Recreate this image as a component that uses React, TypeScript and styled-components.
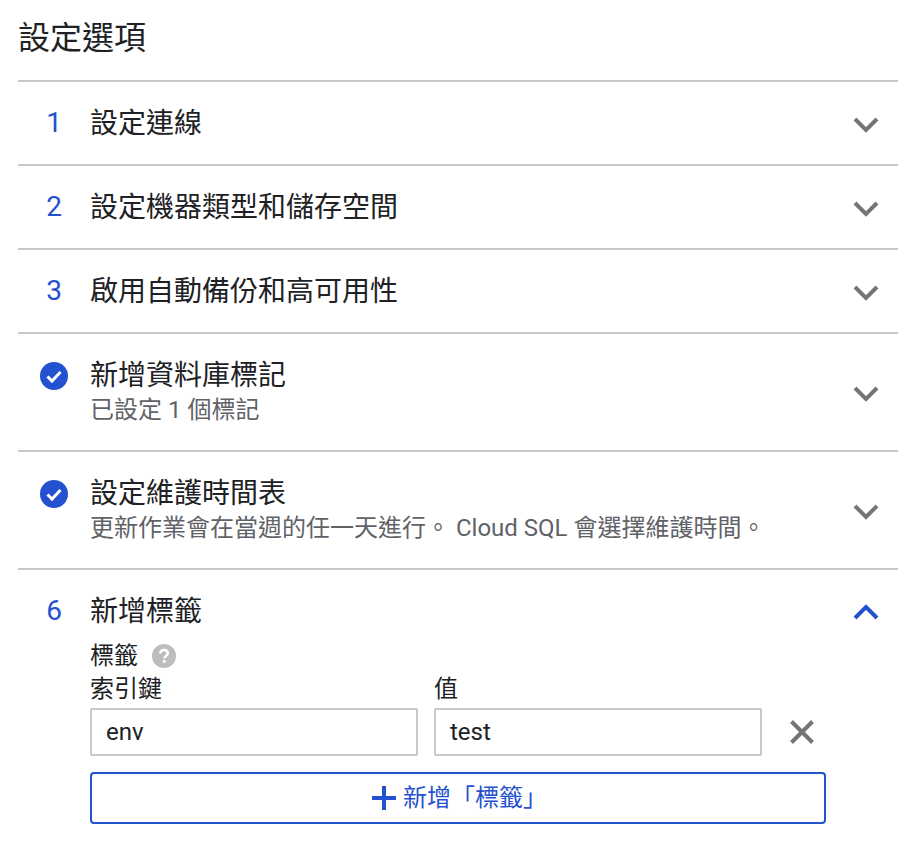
import React from "react";
import styled, { createGlobalStyle } from "styled-components";

const BLUE = "#2451cf";

const GlobalStyle = createGlobalStyle`
  html, body {
    margin: 0;
    padding: 0;
    background: #ffffff;
    font-family: Roboto, "Noto Sans CJK TC", sans-serif;
    color: #202124;
  }
`;

const Container = styled.div`
  width: 880px;
  margin-left: 18px;
  padding-top: 16px;
`;

const Heading = styled.h1`
  margin: 0;
  height: 64px;
  font-size: 32px;
  line-height: 44px;
  font-weight: 400;
`;

const Row = styled.div<{ $height: number }>`
  display: flex;
  align-items: flex-start;
  height: ${(p) => p.$height}px;
  border-top: 2px solid #c8c8c8;
  box-sizing: border-box;
`;

const Marker = styled.div`
  width: 72px;
  height: 84px;
  flex: none;
  display: flex;
  align-items: center;
  padding-left: 22px;
  box-sizing: border-box;
`;

const StepNumber = styled.span`
  width: 28px;
  margin-top: -2px;
  text-align: center;
  color: ${BLUE};
  font-size: 28px;
  line-height: 82px;
`;

const Body = styled.div`
  flex: 1;
  min-width: 0;
`;

const RowTitle = styled.div`
  height: 78px;
  font-size: 28px;
  line-height: 84px;
`;

const DoneTitle = styled.div`
  padding-top: 24px;
  font-size: 28px;
  line-height: 35px;
`;

const RowSub = styled.div`
  font-size: 24px;
  line-height: 34px;
  color: #5f6368;
`;

const ChevronSlot = styled.div<{ $height: number }>`
  width: 64px;
  height: ${(p) => p.$height}px;
  flex: none;
  display: flex;
  align-items: center;
  justify-content: center;
`;

const OpenSection = styled.div`
  display: flex;
  align-items: flex-start;
  border-top: 2px solid #c8c8c8;
`;

const LabelHead = styled.div`
  display: flex;
  align-items: center;
  gap: 14px;
  height: 32px;
  margin-top: -8px;
  font-size: 24px;
  line-height: 32px;
`;

const Fields = styled.div`
  display: grid;
  grid-template-columns: 328px 328px 64px;
  column-gap: 16px;
  width: 736px;
`;

const FieldLabel = styled.div`
  height: 36px;
  font-size: 24px;
  line-height: 35px;
`;

const InputBox = styled.div`
  height: 48px;
  box-sizing: border-box;
  border: 2px solid #c8c8c8;
  border-radius: 2px;
  padding-left: 14px;
  font-size: 24px;
  line-height: 44px;
  color: #202124;
`;

const RemoveButton = styled.div`
  display: flex;
  align-items: center;
  height: 48px;
  padding-left: 10px;
`;

const AddButton = styled.div`
  display: flex;
  align-items: center;
  justify-content: center;
  gap: 7px;
  width: 736px;
  height: 52px;
  margin-top: 16px;
  padding-left: 3px;
  box-sizing: border-box;
  border: 2px solid ${BLUE};
  border-radius: 4px;
  color: ${BLUE};
  font-size: 24px;
  line-height: 44px;
`;

const Chevron: React.FC<{ up?: boolean }> = ({ up }) => (
  <svg width="26" height="16" viewBox="0 0 26 16">
    <path
      d={up ? "M2 14 L13 3 L24 14" : "M2 2 L13 13 L24 2"}
      fill="none"
      stroke={up ? BLUE : "#757575"}
      strokeWidth="4"
    />
  </svg>
);

const CheckIcon = () => (
  <svg width="28" height="28" viewBox="0 0 28 28">
    <circle cx="14" cy="14" r="14" fill={BLUE} />
    <path d="M7.5 14.5 L12 19 L20.5 10" fill="none" stroke="#fff" strokeWidth="3" />
  </svg>
);

const HelpIcon = () => (
  <svg width="24" height="24" viewBox="0 0 24 24">
    <circle cx="12" cy="12" r="12" fill="#bdbdbd" />
    <path
      d="M8.2 9.5 C8.2 7.2 10 6 12 6 C14.2 6 15.8 7.3 15.8 9.2 C15.8 11.6 12.4 11.8 12.4 14.6"
      fill="none"
      stroke="#fff"
      strokeWidth="2.6"
    />
    <rect x="10.9" y="16" width="2.8" height="2.8" fill="#fff" />
  </svg>
);

const CloseIcon = () => (
  <svg width="28" height="28" viewBox="0 0 28 28">
    <path d="M3.5 3.5 L24.5 24.5 M24.5 3.5 L3.5 24.5" stroke="#757575" strokeWidth="4" fill="none" />
  </svg>
);

const PlusIcon = () => (
  <svg width="24" height="24" viewBox="0 0 24 24">
    <path d="M12 0 V24 M0 12 H24" stroke={BLUE} strokeWidth="4" fill="none" />
  </svg>
);

const steps = ["設定連線", "設定機器類型和儲存空間", "啟用自動備份和高可用性"];

const doneSteps = [
  { title: "新增資料庫標記", sub: "已設定 1 個標記" },
  {
    title: "設定維護時間表",
    sub: "更新作業會在當週的任一天進行。 Cloud SQL 會選擇維護時間。",
  },
];

export default function App() {
  return (
    <Container>
      <GlobalStyle />
      <Heading>設定選項</Heading>
      {steps.map((title, idx) => (
        <Row $height={84} key={title}>
          <Marker>
            <StepNumber>{idx + 1}</StepNumber>
          </Marker>
          <Body>
            <RowTitle>{title}</RowTitle>
          </Body>
          <ChevronSlot $height={86}>
            <Chevron />
          </ChevronSlot>
        </Row>
      ))}
      {doneSteps.map((step) => (
        <Row $height={118} key={step.title}>
          <Marker>
            <CheckIcon />
          </Marker>
          <Body>
            <DoneTitle>{step.title}</DoneTitle>
            <RowSub>{step.sub}</RowSub>
          </Body>
          <ChevronSlot $height={120}>
            <Chevron />
          </ChevronSlot>
        </Row>
      ))}
      <OpenSection>
        <Marker>
          <StepNumber>6</StepNumber>
        </Marker>
        <Body>
          <RowTitle>新增標籤</RowTitle>
          <LabelHead>
            標籤
            <HelpIcon />
          </LabelHead>
          <Fields>
            <FieldLabel>索引鍵</FieldLabel>
            <FieldLabel>值</FieldLabel>
            <div />
            <InputBox>env</InputBox>
            <InputBox>test</InputBox>
            <RemoveButton>
              <CloseIcon />
            </RemoveButton>
          </Fields>
          <AddButton>
            <PlusIcon />
            新增「標籤」
          </AddButton>
        </Body>
        <ChevronSlot $height={84}>
          <Chevron up />
        </ChevronSlot>
      </OpenSection>
    </Container>
  );
}
